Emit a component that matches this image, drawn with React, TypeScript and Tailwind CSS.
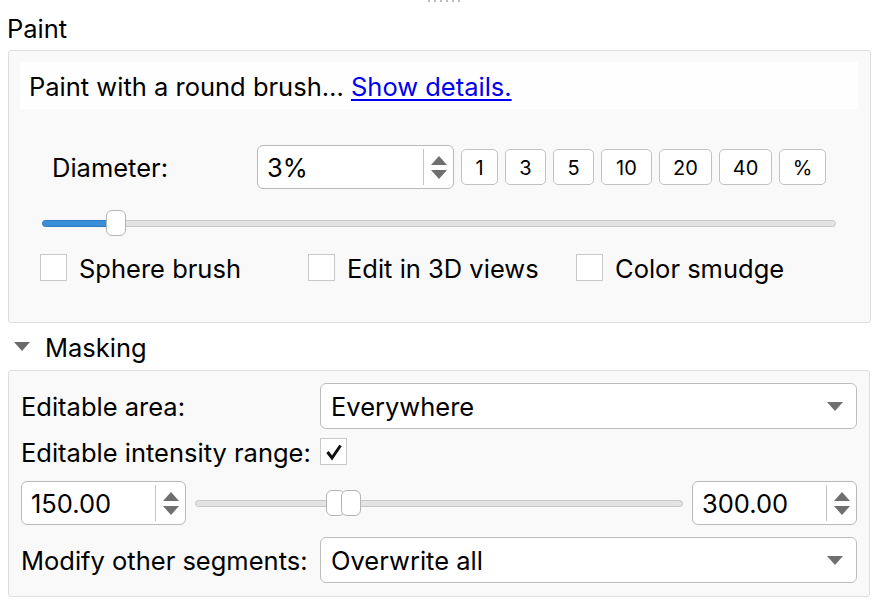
import React from "react";

const font = { fontFamily: 'Inter, "Liberation Sans", Arial, sans-serif' };

function SpinArrows() {
  return (
    <div className="my-[3px] flex w-[30px] flex-col items-center justify-center gap-[5px] self-stretch border-l border-[#c4c4c4]">
      <svg width="16" height="9" viewBox="0 0 16 9"><path d="M8 0 L16 9 L0 9 Z" fill="#6f6f6f" /></svg>
      <svg width="16" height="9" viewBox="0 0 16 9"><path d="M0 0 L16 0 L8 9 Z" fill="#6f6f6f" /></svg>
    </div>
  );
}

function SpinBox({ value, w }: { value: string; w: string }) {
  return (
    <div className={`flex h-[44px] ${w} items-stretch rounded-[6px] border border-[#b9b9b9] bg-white`}>
      <div className="flex flex-1 items-center pl-[9px] pt-[3px] text-[25.5px]">{value}</div>
      <SpinArrows />
    </div>
  );
}

function Btn({ label, w }: { label: string; w: string }) {
  return (
    <div className={`flex h-[36px] ${w} items-center justify-center rounded-[5px] border border-[#c2c2c2] bg-white pt-[2px] text-[20px]`}>
      {label}
    </div>
  );
}

function Check({ checked }: { checked?: boolean }) {
  return (
    <div className="flex h-[27px] w-[27px] shrink-0 items-center justify-center border border-[#c8c8c8] bg-white">
      {checked && (
        <svg width="18" height="18" viewBox="0 0 18 18">
          <path d="M2.5 9 L7 15 L15.5 2.5" fill="none" stroke="#111" strokeWidth="3" strokeLinejoin="miter" />
        </svg>
      )}
    </div>
  );
}

function Combo({ value }: { value: string }) {
  return (
    <div className="flex h-[46px] flex-1 items-center justify-between rounded-[6px] border border-[#bdbdbd] bg-white pl-[10px] pr-[13px] text-[25.5px]">
      <span className="pt-[3px]">{value}</span>
      <svg width="16" height="9" viewBox="0 0 16 9"><path d="M0 0 L16 0 L8 9 Z" fill="#6f6f6f" /></svg>
    </div>
  );
}

export default function App() {
  return (
    <div className="relative h-[606px] w-[872px] overflow-hidden bg-white text-black" style={font}>
      <div className="flex h-[4px] gap-[4px] pl-[428px] pt-0">
        {[0, 1, 2, 3, 4, 5].map((i) => (
          <div key={i} className="h-[2px] w-[2px] bg-[#bdbdbd]" />
        ))}
      </div>
      <div className="h-[46px] pl-[7px] pt-[10px] text-[25.5px] leading-[30px]">Paint</div>

      {/* Paint group */}
      <div className="ml-[8px] mr-[1px] h-[273px] rounded-[3px] border border-[#dedede] bg-[#f9f9f9] pl-[11px] pr-[12px] pt-[11px]">
        <div className="flex h-[47px] items-center bg-[#fefefe] pl-[9px] pt-[3px] text-[25.5px]">
          <span>Paint with a round brush…&nbsp;</span>
          <span className="text-[#0000ee] underline decoration-[2px] underline-offset-[3px]">Show details.</span>
        </div>

        <div className="mt-[36px] flex h-[44px] items-center">
          <div className="w-[237px] pl-[32px] pt-[3px] text-[25.5px]">Diameter:</div>
          <SpinBox value="3%" w="w-[197px]" />
          <div className="ml-[7px] flex gap-[7px]">
            <Btn label="1" w="w-[37px]" />
            <Btn label="3" w="w-[41px]" />
            <Btn label="5" w="w-[41px]" />
            <Btn label="10" w="w-[51px]" />
            <Btn label="20" w="w-[53px]" />
            <Btn label="40" w="w-[53px]" />
            <Btn label="%" w="w-[47px]" />
          </div>
        </div>

        <div className="relative ml-[22px] mt-[21px] h-[26px] w-[794px]">
          <div className="absolute left-0 right-0 top-[10px] h-[7px] rounded-full border border-[#c6c6c6] bg-[#e3e3e3]" />
          <div className="absolute left-0 top-[10px] h-[7px] w-[80px] rounded-l-full border border-[#2f7cc4] bg-[#3b8ed8]" />
          <div className="absolute left-[64px] top-0 h-[26px] w-[20px] rounded-[6px] border border-[#b4b4b4] bg-white" />
        </div>

        <div className="mt-[18px] flex h-[27px] items-center text-[25.5px]">
          <div className="ml-[20px] flex w-[268px] items-center gap-[12px]">
            <Check />
            <span className="pt-[3px]">Sphere brush</span>
          </div>
          <div className="flex w-[268px] items-center gap-[12px]">
            <Check />
            <span className="pt-[3px]">Edit in 3D views</span>
          </div>
          <div className="flex items-center gap-[12px]">
            <Check />
            <span className="pt-[3px]">Color smudge</span>
          </div>
        </div>
      </div>

      {/* Masking header */}
      <div className="flex h-[47px] items-center pl-[14px] text-[25.5px]">
        <svg width="16" height="9" viewBox="0 0 16 9" className="mr-[15px]"><path d="M0 0 L16 0 L8 9 Z" fill="#6a6a6a" /></svg>
        <span className="pt-[3px]">Masking</span>
      </div>

      {/* Masking group */}
      <div className="ml-[8px] mr-[2px] h-[227px] rounded-[3px] border border-[#dedede] bg-[#f9f9f9] pl-[12px] pr-[12px] pt-[12px] text-[25.5px]">
        <div className="flex h-[46px] items-center">
          <div className="w-[299px] pt-[3px]">Editable area:</div>
          <Combo value="Everywhere" />
        </div>
        <div className="mt-[9px] flex h-[27px] items-center">
          <div className="w-[299px] pt-[3px]">Editable intensity range:</div>
          <Check checked />
        </div>
        <div className="mt-[16px] flex h-[44px] items-center">
          <SpinBox value="150.00" w="w-[165px]" />
          <div className="relative mx-[9px] h-[26px] flex-1">
            <div className="absolute left-0 right-0 top-[10px] h-[7px] rounded-full border border-[#c6c6c6] bg-[#e3e3e3]" />
            <div className="absolute left-[131px] top-0 h-[26px] w-[19px] rounded-[6px] border border-[#b4b4b4] bg-white" />
            <div className="absolute left-[146px] top-0 h-[26px] w-[20px] rounded-[6px] border border-[#b4b4b4] bg-white" />
          </div>
          <SpinBox value="300.00" w="w-[165px]" />
        </div>
        <div className="mt-[12px] flex h-[46px] items-center">
          <div className="w-[299px] pt-[3px]">Modify other segments:</div>
          <Combo value="Overwrite all" />
        </div>
      </div>
    </div>
  );
}
